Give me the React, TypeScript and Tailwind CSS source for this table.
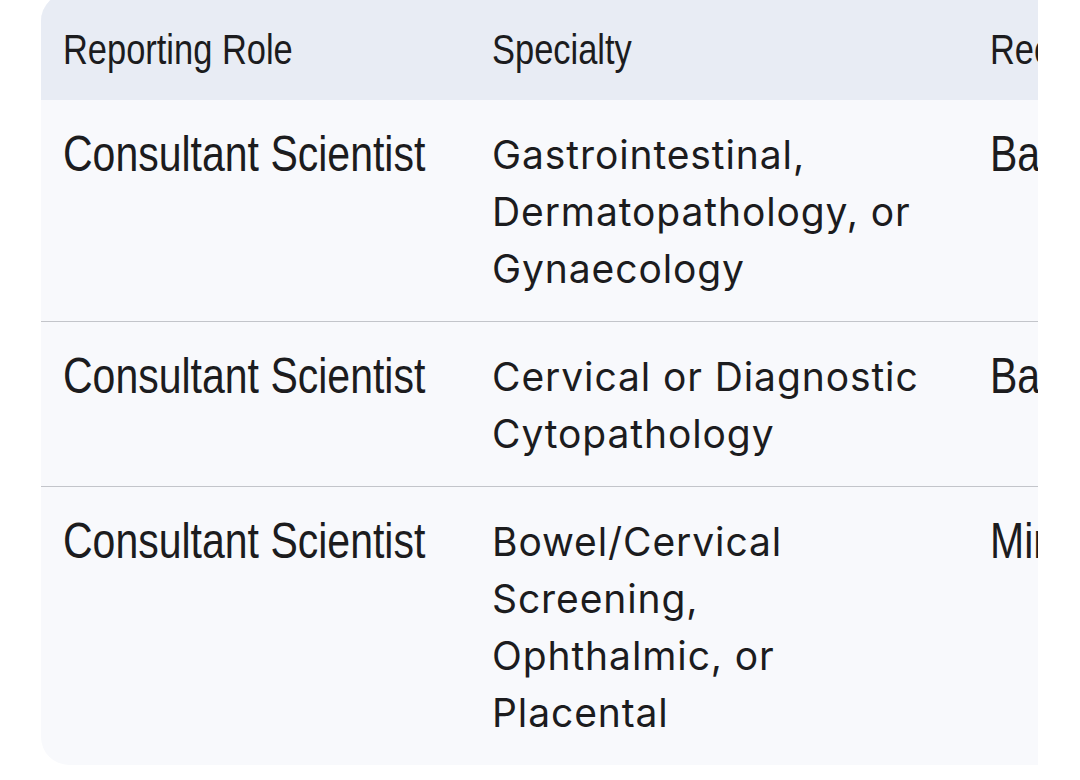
const rows = [
  {
    role: 'Consultant Scientist',
    specialty: ['Gastrointestinal,', 'Dermatopathology, or', 'Gynaecology'],
    grade: 'Band 8c',
  },
  {
    role: 'Consultant Scientist',
    specialty: ['Cervical or Diagnostic', 'Cytopathology'],
    grade: 'Band 8c',
  },
  {
    role: 'Consultant Scientist',
    specialty: ['Bowel/Cervical', 'Screening,', 'Ophthalmic, or', 'Placental'],
    grade: 'Minimum Band 8b',
  },
];

// narrow "handwritten" face: Arial metrics squeezed to Arial Narrow width
const hand = "font-['Liberation_Sans',sans-serif] origin-left scale-x-[0.82] whitespace-nowrap";
const body = "font-['Inter','Roboto',sans-serif]";
const cols = 'grid grid-cols-[429px_498px_420px]';

export default function App() {
  return (
    <div className="min-h-screen bg-white pl-[41px] text-[#1c1c1e]">
      <div className="-mt-[7px] w-[997px] overflow-hidden rounded-l-[28px] bg-[#f8f9fc]">
        <div className={`${cols} h-[107px] items-center bg-[#e8ecf4] text-[42px] leading-none`}>
          <div className="px-[22px] pt-[6px]"><div className={hand}>Reporting Role</div></div>
          <div className="px-[22px] pt-[6px]"><div className={hand}>Specialty</div></div>
          <div className="px-[22px] pt-[6px]"><div className={hand}>Recommended Grade</div></div>
        </div>

        {rows.map((r, i) => (
          <div
            key={i}
            className={`${cols} ${i < rows.length - 1 ? 'border-b border-[#c3c5ca]' : ''}`}
          >
            <div className="px-[22px] pt-[26px] pb-[24px] text-[50px] leading-[57px]">
              <div className={hand}>{r.role}</div>
            </div>
            <div className={`px-[22px] pt-[26px] pb-[24px] ${body} text-[39px] leading-[57px] tracking-[0.9px]`}>
              {r.specialty.map((line, j) => (
                <div key={j} className="whitespace-nowrap">{line}</div>
              ))}
            </div>
            <div className="px-[22px] pt-[26px] pb-[24px] text-[50px] leading-[57px]">
              <div className={hand}>{r.grade}</div>
            </div>
          </div>
        ))}
      </div>
    </div>
  );
}
